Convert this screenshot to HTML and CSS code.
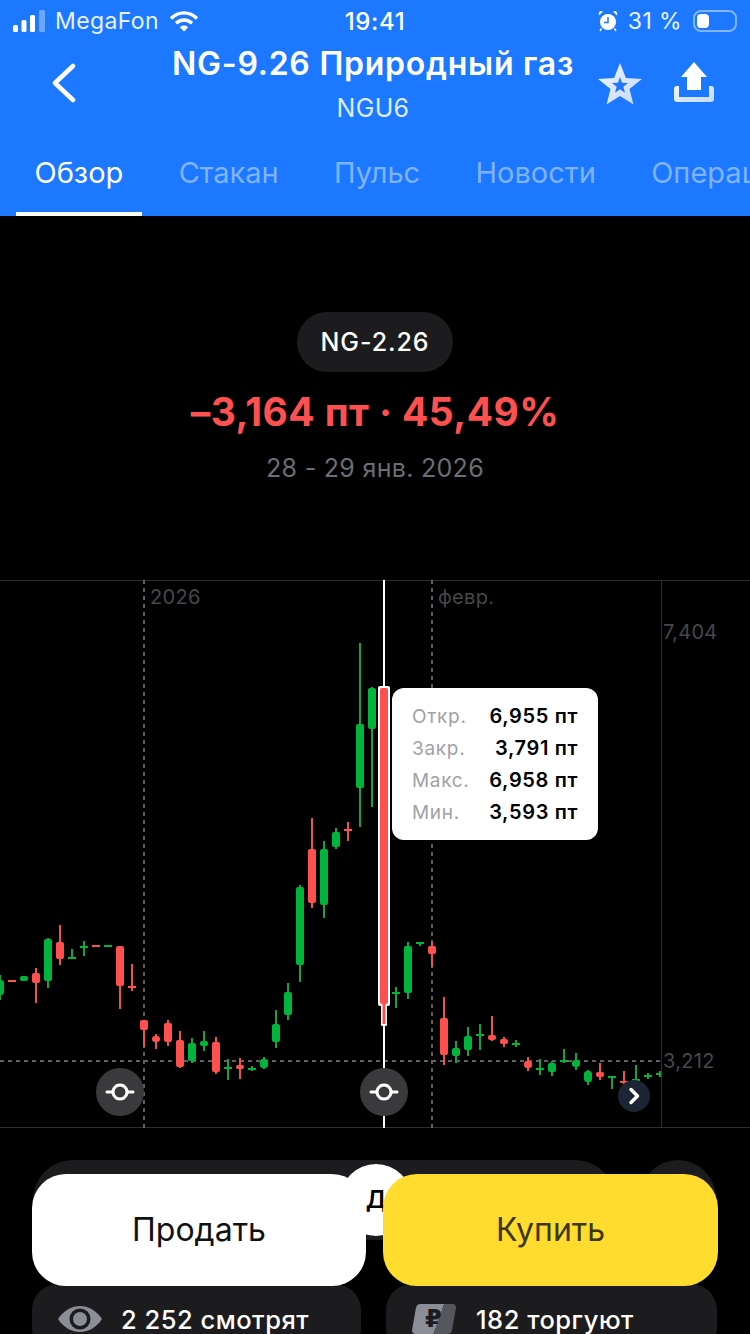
FILE: index.html
```html
<!DOCTYPE html>
<html lang="ru">
<head>
  <meta charset="UTF-8" />
  <meta name="viewport" content="width=device-width, initial-scale=1.0"/>
  <title>NG-9.26 Природный газ</title>
  <link rel="stylesheet" href="styles.css">
</head>
<body>
<div class="screen">
  <header class="top">
    <div class="status">
      <div class="status-left">
        <svg class="signal" width="34" height="22" viewBox="0 0 34 22">
          <rect x="0" y="15" width="5" height="7" rx="1.5" fill="#fff"/>
          <rect x="8.5" y="10" width="5" height="12" rx="1.5" fill="#fff"/>
          <rect x="17" y="5" width="5" height="17" rx="1.5" fill="#fff"/>
          <rect x="26" y="0" width="6" height="22" rx="1.5" fill="#fff" opacity=".35"/>
        </svg>
        <span>MegaFon</span>
        <svg class="wifi" width="30" height="22" viewBox="0 0 30 22" fill="none" stroke="#fff" stroke-width="3.4">
          <path d="M2 8.5C9.500 1 20.500 1 28 8.500"/>
          <path d="M7 13.300C11.500 8.800 18.500 8.800 23 13.300"/>
          <path d="M15 21.500L10.800 17.200C13 15 17 15 19.200 17.200Z" fill="#fff" stroke="none"/>
        </svg>
      </div>
      <div class="status-time">19:41</div>
      <div class="status-right">
        <svg width="20" height="22" viewBox="0 0 20 22">
          <circle cx="10" cy="12" r="8" fill="#fff"/>
          <path d="M10 7v5.500H6" fill="none" stroke="#1c78ff" stroke-width="1.500"/>
          <path d="M1 5.500L5 1.500 2.500 1C1 1.500.5 3.500 1 5.500zM19 5.500L15 1.500l2.500-.5c1.500.5 2 2.500 1.500 4.500z" fill="#fff"/>
          <path d="M3.500 18.500L2 21M16.500 18.500L18 21" stroke="#fff" stroke-width="1.500"/>
        </svg>
        <span>31 %</span>
        <div class="battery"><div class="battery-level"></div></div>
      </div>
    </div>

    <div class="title-row">
      <svg class="back" width="24" height="40" viewBox="0 0 24 40" fill="none" stroke="#fff" stroke-width="4.500" stroke-linecap="round" stroke-linejoin="round">
        <path d="M21 3L3 20l18 17"/>
      </svg>
      <div class="title-text">
        <h1>NG-9.26 Природный газ</h1>
        <div class="ticker">NGU6</div>
      </div>
      <svg class="star" width="44" height="42" viewBox="-22 -23 44 42">
        <defs>
          <linearGradient id="pale" x1="0" y1="0" x2="1" y2="1">
            <stop offset="0" stop-color="#f2f6ff"/>
            <stop offset="1" stop-color="#c4d8ff"/>
          </linearGradient>
        </defs>
        <path fill="url(#pale)" fill-rule="evenodd" d="M0-23L5.900-8.100 21.900-7.100 9.500 3.100 13.500 18.600 0 10-13.500 18.600-9.500 3.100-21.900-7.100-5.900-8.100ZM0-9L-2-3.200-8-3-3.300.8-5 6.700 0 3.300 5 6.700 3.300.8 8-3 2-3.200Z"/>
      </svg>
      <svg class="share" width="40" height="40" viewBox="0 0 40 40">
        <path d="M0 27a3 3 0 0 1 3-3h2v11h30V24h2a3 3 0 0 1 3 3v10a3 3 0 0 1-3 3H3a3 3 0 0 1-3-3z" fill="url(#pale)"/>
        <path d="M20 0L33 15H27V28H13V15H7z" fill="#fff"/>
      </svg>
    </div>

    <nav class="tabs">
      <div class="tab active">Обзор</div>
      <div class="tab">Стакан</div>
      <div class="tab">Пульс</div>
      <div class="tab">Новости</div>
      <div class="tab">Операции</div>
    </nav>
  </header>

  <section class="summary">
    <div class="contract">NG-2.26</div>
    <div class="change">–3,164 пт · 45,49%</div>
    <div class="dates">28 - 29 янв. 2026</div>
  </section>

  <section class="chart">
    <svg class="chart-svg" width="750" height="548" viewBox="0 580 750 548">
      <path class="grid" d="M0 580.500H750M0 1127.500H750M661.500 580V1128"/>
      <path class="grid-dash" d="M144 580V1128M432 580V1128M0 1061H661"/>
      <text class="axis" x="150" y="604">2026</text>
      <text class="axis" x="438" y="604">февр.</text>
      <text class="axis" x="663" y="639">7,404</text>
      <text class="axis" x="663" y="1068">3,212</text>

      <g class="up">
        <path class="wick" d="M0 975V1000M48 938V988M72 949V959M84 941V956M192 1038V1063M204 1031V1051M228 1059V1080M252 1066V1071M264 1057V1069M276 1010V1048M288 983V1020M300 885V982M324 841V918M336 828V849M360 643V827M372 687V807M396 987V1008M408 942V999M420 942V946M456 1041V1063M468 1027V1056M480 1024V1050M516 1040V1047M540 1059V1075M552 1061V1076M564 1049V1063M576 1053V1070M588 1070V1085M612 1076V1089M636 1065V1082M648 1073V1079M660 1071V1077"/>
        <rect x="-4" y="980" width="8" height="15" rx="3"/>
        <rect x="20" y="976" width="8" height="5" rx="2"/>
        <rect x="44" y="939" width="8" height="42" rx="2"/>
        <rect x="68" y="957" width="8" height="2"/>
        <rect x="80" y="946" width="8" height="2"/>
        <rect x="104" y="945" width="8" height="2"/>
        <rect x="188" y="1043" width="8" height="18" rx="2"/>
        <rect x="200" y="1041" width="8" height="5" rx="2"/>
        <rect x="224" y="1067" width="8" height="2"/>
        <rect x="248" y="1068" width="8" height="2"/>
        <rect x="260" y="1059" width="8" height="9" rx="3"/>
        <rect x="272" y="1024" width="8" height="18" rx="2"/>
        <rect x="284" y="992" width="8" height="23" rx="2"/>
        <rect x="296" y="887" width="8" height="78" rx="2"/>
        <rect x="320" y="849" width="8" height="56" rx="2"/>
        <rect x="332" y="832" width="8" height="15" rx="2"/>
        <rect x="356" y="724" width="8" height="64" rx="2"/>
        <rect x="368" y="688" width="8" height="41" rx="2"/>
        <rect x="392" y="992" width="8" height="2"/>
        <rect x="404" y="946" width="8" height="47" rx="2"/>
        <rect x="416" y="942" width="8" height="2"/>
        <rect x="452" y="1048" width="8" height="8" rx="2"/>
        <rect x="464" y="1036" width="8" height="14" rx="2"/>
        <rect x="476" y="1034" width="8" height="2"/>
        <rect x="512" y="1043" width="8" height="2"/>
        <rect x="536" y="1068" width="8" height="2"/>
        <rect x="548" y="1063" width="8" height="9" rx="2"/>
        <rect x="560" y="1060" width="8" height="2"/>
        <rect x="572" y="1060" width="8" height="7" rx="3"/>
        <rect x="584" y="1071" width="8" height="11" rx="3"/>
        <rect x="608" y="1076" width="8" height="2"/>
        <rect x="632" y="1079" width="8" height="2"/>
        <rect x="644" y="1075" width="8" height="2"/>
        <rect x="656" y="1073" width="5" height="2"/>
      </g>

      <g class="down">
        <path class="wick" d="M36 968V1003M60 925V965M120 946V1009M132 964V991M144 1020V1047M156 1034V1049M168 1020V1046M180 1031V1068M216 1037V1074M240 1058V1079M312 818V908M348 822V841M432 942V967M444 997V1065M492 1016V1041M504 1037V1047M528 1057V1071M600 1063V1080M624 1071V1084"/>
        <rect x="8" y="980" width="8" height="2"/>
        <rect x="32" y="973" width="8" height="10" rx="2"/>
        <rect x="56" y="942" width="8" height="17" rx="2"/>
        <rect x="92" y="945" width="8" height="2"/>
        <rect x="116" y="946" width="8" height="40" rx="2"/>
        <rect x="128" y="986" width="8" height="2"/>
        <rect x="140" y="1020" width="8" height="10" rx="2"/>
        <rect x="152" y="1036" width="8" height="6" rx="3"/>
        <rect x="164" y="1023" width="8" height="19" rx="2"/>
        <rect x="176" y="1040" width="8" height="27" rx="2"/>
        <rect x="212" y="1042" width="8" height="30" rx="2"/>
        <rect x="236" y="1065" width="8" height="4" rx="2"/>
        <rect x="308" y="849" width="8" height="54" rx="2"/>
        <rect x="344" y="829" width="8" height="2"/>
        <rect x="428" y="946" width="8" height="8" rx="2"/>
        <rect x="440" y="1018" width="8" height="37" rx="2"/>
        <rect x="488" y="1035" width="8" height="5" rx="2"/>
        <rect x="500" y="1039" width="8" height="5" rx="2"/>
        <rect x="524" y="1061" width="8" height="7" rx="3"/>
        <rect x="596" y="1072" width="8" height="5" rx="2"/>
        <rect x="620" y="1081" width="8" height="2"/>
      </g>

      <!-- selected candle -->
      <path class="cursor" d="M384 580V1128"/>
      <rect x="381" y="1000" width="6" height="26" rx="1.500" fill="#fff"/>
      <rect x="378" y="686" width="12" height="320" rx="2" fill="#fff"/>
      <rect x="382.500" y="1004" width="3" height="20" class="down-fill"/>
      <rect x="380" y="688" width="8" height="316" rx="2" class="down-fill"/>

      <g class="handle" transform="translate(120 1092)">
        <circle r="24"/>
        <path d="M-13 0H-7M7 0H13M0-7a7 7 0 1 0 .01 0z"/>
      </g>
      <g class="handle" transform="translate(384 1092)">
        <circle r="24"/>
        <path d="M-13 0H-7M7 0H13M0-7a7 7 0 1 0 .01 0z"/>
      </g>
      <circle cx="634" cy="1096" r="16" fill="#1b2533"/>
      <path d="M631 1089.500l6.500 6.500-6.500 6.500" fill="none" stroke="#fff" stroke-width="3.500" stroke-linecap="round" stroke-linejoin="round"/>
    </svg>

    <div class="tip">
      <span class="tip-label">Откр.</span><span class="tip-value">6,955 пт</span>
      <span class="tip-label">Закр.</span><span class="tip-value">3,791 пт</span>
      <span class="tip-label">Макс.</span><span class="tip-value">6,958 пт</span>
      <span class="tip-label">Мин.</span><span class="tip-value">3,593 пт</span>
    </div>
  </section>

  <div class="periods">
    <div class="period-group"><div class="period-active">Д</div></div>
    <div class="period-more"></div>
  </div>

  <div class="stats">
    <div class="stat">
      <svg width="44" height="28" viewBox="0 0 44 28">
        <path d="M0 14C6 5 14 1 22 1s16 4 22 13c-6 9-14 13-22 13S6 23 0 14z" fill="#8b8e96"/>
        <circle cx="22" cy="14" r="10.500" fill="#1c1c1e"/>
        <circle cx="22" cy="14" r="7" fill="#8b8e96"/>
      </svg>
      <span>2 252 смотрят</span>
    </div>
    <div class="stat stat-traders">
      <div class="ruble"><span>₽</span></div>
      <span>182 торгуют</span>
    </div>
  </div>

  <div class="actions">
    <div class="btn btn-sell">Продать</div>
    <div class="btn btn-buy">Купить</div>
  </div>
</div>
</body>
</html>
```

FILE: styles.css
```css
* { box-sizing: border-box; }
html, body { margin: 0; background: #000; }
body { font-family: Inter, 'Noto Sans', sans-serif; color: #fff; }
.screen { position: relative; width: 750px; height: 1334px; overflow: hidden; background: #000; }

.top { height: 216px; background: #1c78ff; overflow: hidden; }

.status { display: grid; grid-template-columns: 1fr auto 1fr; align-items: center; height: 42px; font-size: 23px; }
.status-left { display: flex; align-items: center; padding-left: 13px; }
.status-left span { margin-left: 8px; opacity: .9; letter-spacing: .4px; }
.wifi { margin-left: 10px; }
.status-time { font-size: 24px; font-weight: 500; letter-spacing: .6px; }
.status-right { display: flex; align-items: center; justify-content: flex-end; padding-right: 13px; }
.status-right span { margin-left: 10px; opacity: .9; letter-spacing: .4px; }
.battery { position: relative; width: 44px; height: 22px; margin-left: 11px; border: 2px solid rgba(255,255,255,.45); border-radius: 8px; padding: 2px; }
.battery-level { width: 12px; height: 14px; background: #fff; border-radius: 4px; }

.title-row { position: relative; display: flex; align-items: center; justify-content: center; height: 88px; }
.back { position: absolute; left: 52px; top: 21px; }
.star { position: absolute; left: 598px; top: 21px; }
.share { position: absolute; left: 674px; top: 20px; }
.title-text { text-align: center; margin-left: -4px; }
.title-text h1 { margin: 0; font-size: 32px; line-height: 44px; font-weight: 600; letter-spacing: .75px; }
.ticker { font-size: 25px; line-height: 44px; color: #dfeaff; letter-spacing: .3px; }

.tabs { display: flex; gap: 18.3px; padding-left: 16px; height: 86px; }
.tab { flex: none; height: 86px; padding: 0 18.5px; line-height: 86px; font-size: 29px; color: rgba(255,255,255,.45); border-bottom: 4px solid transparent; }
.tab.active { color: #fff; border-bottom-color: #fff; }

.summary { display: flex; flex-direction: column; align-items: center; height: 364px; padding-top: 96px; }
.contract { height: 60px; padding: 0 24px; line-height: 60px; border-radius: 30px; background: #1c1c1e; font-size: 25px; font-weight: 500; letter-spacing: .9px; }
.change { margin-top: 14px; font-size: 39px; line-height: 52px; font-weight: 700; letter-spacing: .4px; color: #ff5050; }
.dates { margin-top: 8px; font-size: 25px; line-height: 44px; color: #6d6d72; letter-spacing: .3px; }

.chart { position: relative; height: 548px; }
.chart-svg { display: block; }
.grid { fill: none; stroke: #2e2e30; stroke-width: 1; }
.grid-dash { fill: none; stroke: #616163; stroke-width: 2; stroke-dasharray: 4 4; }
.axis { font-size: 20px; fill: #47474a; letter-spacing: .3px; }
.wick { fill: none; stroke-width: 2; }
.up rect { fill: #00b43c; }
.up .wick { stroke: #0fa544; }
.down rect { fill: #ff5050; }
.down .wick { stroke: #f25050; }
.down-fill { fill: #ff5050; }
.cursor { stroke: #fff; stroke-width: 2; }
.handle circle { fill: #3a3a3c; }
.handle path { fill: none; stroke: #fff; stroke-width: 3; stroke-linecap: round; }

.tip { position: absolute; left: 392px; top: 108px; width: 206px; height: 152px; padding: 12px 20px; display: grid; grid-template-columns: auto auto; justify-content: space-between; grid-auto-rows: 32px; align-items: center; background: #fff; border-radius: 12px; font-size: 19px; }
.tip-label { color: #a0a2a8; letter-spacing: .7px; }
.tip-value { color: #000; font-size: 20px; font-weight: 600; text-align: right; letter-spacing: .65px; }

.periods { display: flex; gap: 25px; margin: 32px 34px 0 33px; }
.period-group { flex: 1; height: 80px; padding: 4px 0 4px 307px; border-radius: 40px; background: #1c1c1e; }
.period-active { width: 72px; height: 72px; border-radius: 36px; background: #fff; color: #000; font-size: 24px; font-weight: 600; line-height: 72px; text-align: center; }
.period-more { width: 76px; height: 80px; border-radius: 40px; background: #1c1c1e; }

.stats { display: flex; gap: 25px; margin: 44px 33px 0 32px; }
.stat { flex: 1; display: flex; align-items: center; gap: 19px; height: 70px; padding: 0 26px 0; border-radius: 26px; background: #1c1c1e; font-size: 25.5px; font-weight: 500; letter-spacing: .5px; }
.stat-traders { padding-left: 28px; gap: 22px; }
.ruble { display: flex; align-items: center; justify-content: center; width: 40px; height: 30px; background: linear-gradient(100deg, #8b8e96 60%, #55575c 60%); transform: skewX(-10deg); border-radius: 4px; color: #1c1c1e; font: 700 24px 'DejaVu Sans', sans-serif; }
.ruble span { transform: skewX(10deg); }

.actions { position: absolute; left: 32px; top: 1174px; display: flex; gap: 17px; }
.btn { height: 112px; border-radius: 34px; font-size: 32px; line-height: 112px; text-align: center; }
.btn-sell { width: 334px; background: #fff; color: #111; }
.btn-buy { width: 335px; background: #ffdc2e; color: #3d3710; }
```
